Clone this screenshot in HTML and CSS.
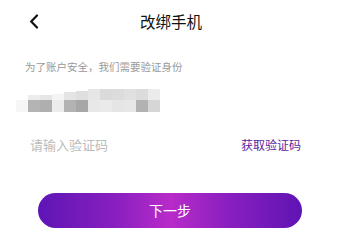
FILE: index.html
```html
<!DOCTYPE html>
<html lang="zh-CN">
<head>
    <meta charset="UTF-8">
    <meta name="viewport" content="width=device-width, initial-scale=1.0">
    <title>改绑手机</title>
    <link rel="stylesheet" href="styles.css">
</head>
<body>
<div class="page">
    <div class="header">
        <a href="javascript:;" class="back">
            <svg width="10" height="15" viewBox="0 0 10 15">
                <path d="M8 1.5 L2.2 7.5 L8 13.5" fill="none" stroke="#111" stroke-width="2.2" stroke-linecap="round" stroke-linejoin="round"/>
            </svg>
        </a>
        <h1 class="title">改绑手机</h1>
        <span></span>
    </div>

    <p class="tip">为了账户安全，我们需要验证身份</p>

    <!-- 手机号打码 -->
    <div class="phone">
        <div class="mask mask_top">
            <span></span><span></span><span></span><span></span><span></span><span></span>
            <span></span><span></span><span></span><span></span><span></span><span></span>
        </div>
        <div class="mask mask_bottom">
            <span></span><span></span><span></span><span></span><span></span><span></span>
            <span></span><span></span><span></span><span></span><span></span><span></span>
        </div>
    </div>

    <div class="code_row">
        <input class="code_input" type="text" placeholder="请输入验证码">
        <a href="javascript:;" class="get_code">获取验证码</a>
    </div>

    <a href="javascript:;" class="btn_next">下一步</a>
</div>
</body>
</html>
```

FILE: styles.css
```css
* {
    margin: 0;
    padding: 0;
    box-sizing: border-box;
}
body {
    background: #fff;
    font-family: "Noto Sans CJK SC", "Noto Sans", sans-serif;
}
a {
    text-decoration: none;
}

.page {
    width: 342px;
}

/* 顶部栏 */
.header {
    height: 42px;
    display: grid;
    grid-template-columns: 1fr auto 1fr;
    align-items: center;
}
.header .back {
    display: flex;
    padding-left: 29px;
    padding-top: 1px;
}
.header .title {
    font-size: 15.5px;
    font-weight: 400;
    color: #111;
    line-height: 20px;
}

.tip {
    margin-top: 18px;
    padding-left: 25px;
    font-size: 10.5px;
    line-height: 14px;
    color: #999;
}

/* 手机号马赛克 */
.phone {
    margin-top: 15px;
    padding-left: 16px;
}
.mask {
    display: flex;
    align-items: flex-end;
}
.mask span {
    width: 12px;
    display: block;
}
.mask_top {
    height: 11px;
}
.mask_top span {
    height: 11px;
}
.mask_bottom span {
    height: 12px;
}

.mask_top span:nth-child(1) { background: #fff; }
.mask_top span:nth-child(2) { background: #ececec; height: 5px; }
.mask_top span:nth-child(3) { background: #e6e6e6; height: 5px; }
.mask_top span:nth-child(4) { background: #f4f4f4; height: 6px; }
.mask_top span:nth-child(5) { background: #e4e4e4; height: 8px; }
.mask_top span:nth-child(6) { background: #dfdfdf; height: 9px; }
.mask_top span:nth-child(7) { background: #e6e6e6; }
.mask_top span:nth-child(8) { background: #dadada; }
.mask_top span:nth-child(9) { background: #dcdcdc; }
.mask_top span:nth-child(10) { background: #e0e0e0; }
.mask_top span:nth-child(11) { background: #dcdcdc; }
.mask_top span:nth-child(12) { background: #ebebeb; }

.mask_bottom span:nth-child(1) { background: #f6f6f6; }
.mask_bottom span:nth-child(2) { background: #b4b4b4; }
.mask_bottom span:nth-child(3) { background: #afafaf; }
.mask_bottom span:nth-child(4) { background: #ececec; }
.mask_bottom span:nth-child(5) { background: #b3b3b3; }
.mask_bottom span:nth-child(6) { background: #a7a7a7; }
.mask_bottom span:nth-child(7) { background: #e8e8e8; }
.mask_bottom span:nth-child(8) { background: #eaeaea; }
.mask_bottom span:nth-child(9) { background: #e5e5e5; }
.mask_bottom span:nth-child(10) { background: #e7e7e7; }
.mask_bottom span:nth-child(11) { background: #b2b2b2; }
.mask_bottom span:nth-child(12) { background: #d6d6d6; }

/* 验证码 */
.code_row {
    margin-top: 23px;
    height: 20px;
    padding: 0 41px 0 30px;
    display: flex;
    align-items: center;
    justify-content: space-between;
}
.code_input {
    border: none;
    outline: none;
    width: 150px;
    font-family: inherit;
    font-size: 13px;
    line-height: 20px;
    color: #333;
}
.code_input::placeholder {
    color: #bbb;
}
.get_code {
    font-size: 12px;
    line-height: 20px;
    color: #5b1f9e;
}

/* 下一步按钮 */
.btn_next {
    display: block;
    margin: 38px 0 0 38px;
    width: 264px;
    height: 35px;
    line-height: 35px;
    border-radius: 18px;
    text-align: center;
    font-size: 14px;
    color: #fff;
    background: linear-gradient(90deg, #5e15b6 0%, #8a1fc0 30%, #b82bc9 50%, #8a1fc0 72%, #5f14b4 100%);
}
```
